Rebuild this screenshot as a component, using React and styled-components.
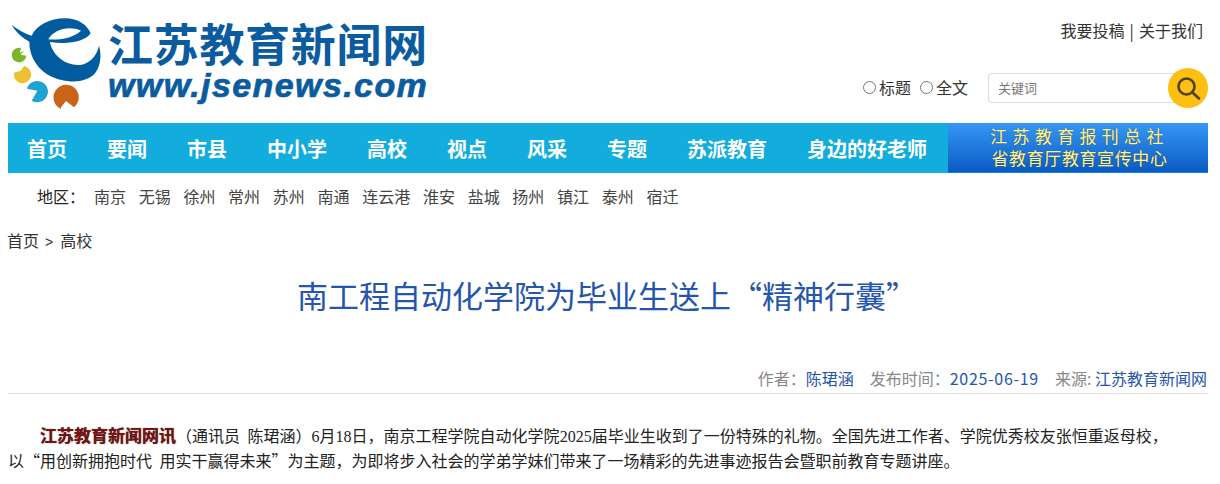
import React from "react";
import styled, { createGlobalStyle } from "styled-components";

const GlobalStyle = createGlobalStyle`
  html, body {
    margin: 0;
    padding: 0;
    background: #fff;
    overflow: hidden;
  }
  body {
    font-family: "Noto Sans CJK SC", "Liberation Sans", sans-serif;
    color: #333;
  }
`;

const Page = styled.div`
  width: 1200px;
  margin-left: 8px;
`;

const Header = styled.header`
  height: 123px;
  display: flex;
  justify-content: space-between;
`;

const Brand = styled.div`
  display: flex;
`;

const LogoMark = styled.svg`
  width: 110px;
  height: 115px;
  margin-left: -8px;
  flex: none;
`;

const BrandText = styled.div`
  display: flex;
  flex-direction: column;
  margin-left: -2px;
  padding-top: 19px;
`;

const BrandName = styled.div`
  font-family: "Noto Sans CJK SC", sans-serif;
  font-size: 45px;
  line-height: 48px;
  letter-spacing: 0.7px;
  font-weight: 700;
  color: #0b5c9e;
  white-space: nowrap;
`;

const BrandUrl = styled.div`
  font-family: "Liberation Sans", sans-serif;
  font-size: 34px;
  line-height: 36px;
  font-weight: 700;
  font-style: italic;
  color: #0b5c9e;
  letter-spacing: 1.4px;
  -webkit-text-stroke: 0.7px #0b5c9e;
  white-space: nowrap;
`;

const HeaderRight = styled.div`
  display: flex;
  flex-direction: column;
  align-items: flex-end;
`;

const TopLinks = styled.div`
  margin-top: 19px;
  margin-right: 5px;
  font-size: 16px;
  line-height: 23px;
  word-spacing: 1.5px;
  color: #333;
`;

const SearchRow = styled.div`
  display: flex;
  align-items: center;
  margin-top: 26px;
`;

const RadioLabel = styled.label`
  display: flex;
  align-items: center;
  font-size: 16px;
  margin-right: 9px;
  padding-bottom: 2px;
  color: #333;
`;

const RadioDot = styled.span`
  width: 11px;
  height: 11px;
  border: 1px solid #767676;
  border-radius: 50%;
  margin-right: 3px;
`;

const SearchBox = styled.div`
  display: flex;
  align-items: center;
  margin-left: 11px;
  position: relative;
  width: 220px;
  height: 40px;
`;

const SearchInput = styled.div`
  width: 190px;
  height: 30px;
  border: 1px solid #ddd;
  border-radius: 4px;
  font-size: 13px;
  line-height: 28px;
  color: #777;
  padding-left: 9px;
  box-sizing: border-box;
`;

const SearchButton = styled.button`
  position: absolute;
  right: 0;
  top: 0;
  width: 40px;
  height: 40px;
  border: none;
  padding: 0;
  border-radius: 50%;
  background: #fdbf12;
  display: flex;
  align-items: center;
  justify-content: center;
`;

const NavBar = styled.nav`
  display: flex;
  height: 50px;
  background: #12addd;
`;

const NavItem = styled.a`
  padding: 0 21px 0 19px;
  font-size: 20px;
  line-height: 51px;
  font-weight: 700;
  color: #fff;
  white-space: nowrap;
`;

const Banner = styled.div`
  margin-left: auto;
  width: 260px;
  height: 50px;
  box-sizing: border-box;
  padding: 2px 0 0 3px;
  background: linear-gradient(#3597f5, #0a5bc4);
  border-bottom: 1px solid #1a7fd8;
  display: flex;
  flex-direction: column;
  align-items: center;
  justify-content: center;
  font-family: "Liberation Serif", "Noto Sans CJK SC", serif;
  font-size: 17px;
  line-height: 22px;
  color: #fdf59a;
  text-shadow: 0 0 1px #5b4a10;
  white-space: nowrap;
`;

const BannerLine = styled.div`
  letter-spacing: ${(p) => p.$spacing}px;
`;

const RegionRow = styled.div`
  display: flex;
  align-items: center;
  height: 45px;
  padding: 0 0 2px 29px;
  font-size: 16px;
  color: #333;
`;

const RegionLabel = styled.span`
  width: 57px;
  color: #222;
`;

const RegionLink = styled.a`
  margin-right: 12.7px;
  color: #444;
`;

const Breadcrumb = styled.div`
  margin: 8px 0 0 -1px;
  font-size: 16px;
  line-height: 24px;
  color: #333;
`;

const Crumb = styled.span`
  font-size: 14px;
  margin: 0 7px 0 6px;
  font-family: "Liberation Sans", sans-serif;
`;

const Title = styled.h1`
  margin: 17px 0 0;
  padding-right: 2px;
  font-size: 31px;
  line-height: 48px;
  font-weight: 400;
  text-align: center;
  color: #2656ab;
`;

const Meta = styled.div`
  margin-top: 47px;
  height: 28px;
  box-sizing: border-box;
  padding-right: 1px;
  border-bottom: 1px solid #ddd;
  display: flex;
  justify-content: flex-end;
  font-size: 16px;
  line-height: 24px;
  color: #888;
  white-space: nowrap;
`;

const MetaGroup = styled.span`
  margin-left: 16px;
`;

const MetaValue = styled.span`
  color: #2656ab;
`;

const MetaDate = styled(MetaValue)`
  letter-spacing: 0.7px;
`;

const Article = styled.p`
  margin: 29px 0 0;
  width: 1160px;
  font-size: 16px;
  line-height: 25px;
  word-spacing: 4px;
  text-indent: 32px;
  color: #222;
`;

const Lead = styled.strong`
  font-size: 17px;
  line-height: 1;
  color: #7a1010;
  text-shadow: 0 0 1px #333;
`;

const Num = styled.span`
  font-family: "Liberation Serif", serif;
  line-height: 1;
`;

const NAV = ["首页", "要闻", "市县", "中小学", "高校", "视点", "风采", "专题", "苏派教育", "身边的好老师"];
const REGIONS = ["南京", "无锡", "徐州", "常州", "苏州", "南通", "连云港", "淮安", "盐城", "扬州", "镇江", "泰州", "宿迁"];

const Logo = () => (
  <LogoMark viewBox="0 0 330 345">
    <path
      fill="#005c9f"
      fillRule="evenodd"
      d="M35 75C55 90 75 102 95 107C110 75 150 55 195 55C235 55 262 75 272 100C255 125 205 135 150 126C155 160 190 195 235 195C265 195 290 170 297 137C305 165 303 195 285 220C265 243 225 250 185 240C130 228 88 185 88 125C70 115 48 98 35 75ZM145 118C160 90 205 75 243 92C225 110 185 122 145 118Z"
    />
    <path fill="#7fb52b" d="M63 144A22 22 0 1 0 79 167L62 164L72 153L60 158Z" />
    <path fill="#ecc232" d="M72 198A26 26 0 1 1 42 218L62 212Z" />
    <path fill="#1fa3d2" d="M81 266A32 32 0 1 1 95 302L112 272Z" />
    <path fill="#c96318" d="M183 327A38 38 0 1 1 222 322L198 303L183 322Z" />
  </LogoMark>
);

export default function App() {
  return (
    <Page>
      <GlobalStyle />
      <Header>
        <Brand>
          <Logo />
          <BrandText>
            <BrandName>江苏教育新闻网</BrandName>
            <BrandUrl>www.jsenews.com</BrandUrl>
          </BrandText>
        </Brand>
        <HeaderRight>
          <TopLinks>我要投稿 | 关于我们</TopLinks>
          <SearchRow>
            <RadioLabel>
              <RadioDot />
              标题
            </RadioLabel>
            <RadioLabel>
              <RadioDot />
              全文
            </RadioLabel>
            <SearchBox>
              <SearchInput>关键词</SearchInput>
              <SearchButton>
                <svg width="26" height="26" viewBox="0 0 26 26" fill="none" stroke="#4d4325" strokeWidth="2.6">
                  <circle cx="11.5" cy="11.5" r="8" />
                  <path d="M17.5 17.5L24 23.5" strokeLinecap="round" />
                </svg>
              </SearchButton>
            </SearchBox>
          </SearchRow>
        </HeaderRight>
      </Header>
      <NavBar>
        {NAV.map((n) => (
          <NavItem key={n}>{n}</NavItem>
        ))}
        <Banner>
          <BannerLine $spacing={5.3}>江苏教育报刊总社</BannerLine>
          <BannerLine $spacing={0.6}>省教育厅教育宣传中心</BannerLine>
        </Banner>
      </NavBar>
      <RegionRow>
        <RegionLabel>地区：</RegionLabel>
        {REGIONS.map((r) => (
          <RegionLink key={r}>{r}</RegionLink>
        ))}
      </RegionRow>
      <Breadcrumb>
        首页<Crumb>&gt;</Crumb>高校
      </Breadcrumb>
      <Title>南工程自动化学院为毕业生送上“精神行囊”</Title>
      <Meta>
        <MetaGroup>
          作者：<MetaValue>陈珺涵</MetaValue>
        </MetaGroup>
        <MetaGroup>
          发布时间：<MetaDate>2025-06-19</MetaDate>
        </MetaGroup>
        <MetaGroup>
          来源: <MetaValue>江苏教育新闻网</MetaValue>
        </MetaGroup>
      </Meta>
      <Article>
        <Lead>江苏教育新闻网讯</Lead>（通讯员 陈珺涵）<Num>6</Num>月<Num>18</Num>日，南京工程学院自动化学院<Num>2025</Num>届毕业生收到了一份特殊的礼物。全国先进工作者、学院优秀校友张恒重返母校，以“用创新拥抱时代 用实干赢得未来”为主题，为即将步入社会的学弟学妹们带来了一场精彩的先进事迹报告会暨职前教育专题讲座。
      </Article>
    </Page>
  );
}
